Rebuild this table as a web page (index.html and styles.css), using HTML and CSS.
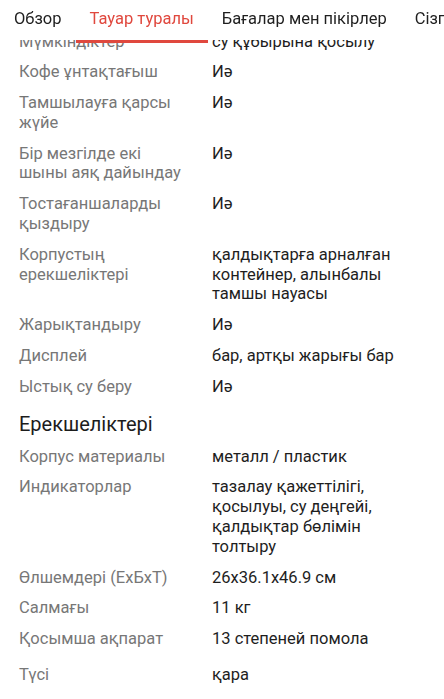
FILE: index.html
```html
<!DOCTYPE html>
<html lang="kk">
<head>
<meta charset="utf-8">
<title>Тауар туралы</title>
<link rel="stylesheet" href="styles.css">
</head>
<body>
<nav class="tabs">
  <a class="tab">Обзор</a>
  <a class="tab tab-active">Тауар туралы</a>
  <a class="tab">Бағалар мен пікірлер</a>
  <a class="tab">Сізге ұнауы мүмкін</a>
</nav>
<main class="specs">
  <div class="row"><span class="label">Мүмкіндіктер</span><span class="value">су құбырына қосылу</span></div>
  <div class="row"><span class="label">Кофе ұнтақтағыш</span><span class="value">Иә</span></div>
  <div class="row"><span class="label">Тамшылауға қарсы жүйе</span><span class="value">Иә</span></div>
  <div class="row"><span class="label">Бір мезгілде екі шыны аяқ дайындау</span><span class="value">Иә</span></div>
  <div class="row"><span class="label">Тостағаншаларды қыздыру</span><span class="value">Иә</span></div>
  <div class="row"><span class="label">Корпустың ерекшеліктері</span><span class="value">қалдықтарға арналған контейнер, алынбалы тамшы науасы</span></div>
  <div class="row"><span class="label">Жарықтандыру</span><span class="value">Иә</span></div>
  <div class="row"><span class="label">Дисплей</span><span class="value">бар, артқы жарығы бар</span></div>
  <div class="row"><span class="label">Ыстық су беру</span><span class="value">Иә</span></div>
  <h2 class="group-title">Ерекшеліктері</h2>
  <div class="row"><span class="label">Корпус материалы</span><span class="value">металл / пластик</span></div>
  <div class="row"><span class="label">Индикаторлар</span><span class="value">тазалау қажеттілігі, қосылуы, су деңгейі, қалдықтар бөлімін толтыру</span></div>
  <div class="row"><span class="label">Өлшемдері (ЕxБxТ)</span><span class="value">26x36.1x46.9 см</span></div>
  <div class="row"><span class="label">Салмағы</span><span class="value">11 кг</span></div>
  <div class="row"><span class="label">Қосымша ақпарат</span><span class="value">13 степеней помола</span></div>
  <div class="row row-last"><span class="label">Түсі</span><span class="value">қара</span></div>
</main>
</body>
</html>
```

FILE: styles.css
```css
html, body {
  margin: 0;
  padding: 0;
  background: #ffffff;
}
body {
  font-family: Roboto, "Noto Sans", sans-serif;
  color: #222222;
  overflow: hidden;
}
.tabs {
  position: fixed;
  top: 0;
  left: 0;
  right: 0;
  height: 40px;
  background: #ffffff;
  display: flex;
  white-space: nowrap;
  z-index: 2;
}
.tab {
  position: relative;
  padding: 0 14px;
  font-size: 16.5px;
  line-height: 37px;
  color: #1f1f1f;
  flex: none;
}
.tab:first-child {
  padding-left: 14px;
}
.tab-active {
  color: #e0483e;
}
.tab-active::after {
  content: "";
  position: absolute;
  left: 0;
  right: 0;
  bottom: -3px;
  height: 3px;
  background: #e0483e;
}
.specs {
  padding: 31.5px 24px 0 19px;
}
.row {
  display: grid;
  grid-template-columns: 169px 1fr;
  column-gap: 24px;
  font-size: 16.5px;
  line-height: 1.2;
  margin-bottom: 11px;
}
.label {
  color: #777777;
}
.value {
  color: #1e1e1e;
}
.row-last {
  margin-top: 16px;
}
.group-title {
  margin: 13px 0 9px;
  font-size: 20px;
  line-height: 28px;
  font-weight: 400;
  color: #1c1c1c;
}
```
